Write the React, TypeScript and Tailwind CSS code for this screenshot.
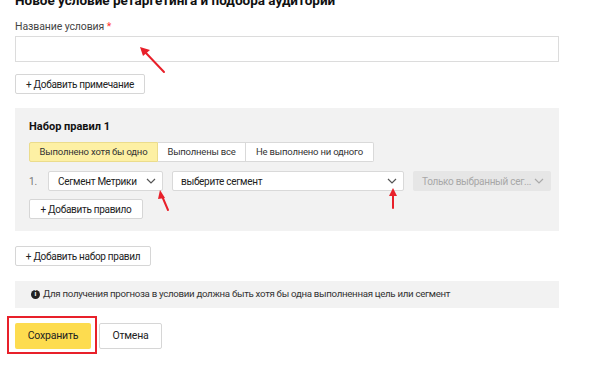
import React from "react";

const Chevron = ({ className = "" }: { className?: string }) => (
  <svg width="10" height="6" viewBox="0 0 10 6" className={className} fill="none">
    <path d="M1 1l4 4 4-4" stroke="currentColor" strokeWidth="1.2" />
  </svg>
);

export default function App() {
  return (
    <div
      className="relative w-[600px] h-[365px] overflow-hidden bg-white text-[#222] whitespace-nowrap"
      style={{ fontFamily: 'Roboto, "Liberation Sans", Arial, sans-serif' }}
    >
      <div className="pl-[15px] w-[559px]">
        <div className="-mt-[8px] h-[16px] text-[13.5px] leading-[16px] font-bold text-[#111]">
          Новое условие ретаргетинга и подбора аудитории
        </div>
        <div className="mt-[13px] h-[12px] text-[10.5px] tracking-[-0.1px] leading-[12px] text-[#444]">
          Название условия <span className="text-[#f33]">*</span>
        </div>
        <div className="mt-[3px] h-[26px] border border-[#dcdcdc] bg-white" />
        <div className="mt-[12px] flex">
          <div className="h-[20px] w-[130px] flex items-center justify-center border border-[#d6d6d6] rounded-[2px] text-[10px] tracking-[-0.3px] text-[#222] bg-white">
            + Добавить примечание
          </div>
        </div>

        <div className="mt-[14px] bg-[#f2f2f2] pl-[14px] pt-[12px] pb-[12px]">
          <div className="h-[14px] text-[11px] leading-[14px] font-bold text-[#111]">Набор правил 1</div>
          <div className="mt-[8px] flex h-[20px] text-[9.5px] tracking-[-0.2px]">
            <div className="w-[129px] flex items-center justify-center bg-[#fdf0a4] border border-[#ebdc8c] rounded-l-[2px] text-[#333]">
              Выполнено хотя бы одно
            </div>
            <div className="w-[88px] flex items-center justify-center bg-white border-y border-r border-[#d9d9d9] text-[#333]">
              Выполнены все
            </div>
            <div className="w-[128px] flex items-center justify-center bg-white border-y border-r border-[#d9d9d9] rounded-r-[2px] text-[#333]">
              Не выполнено ни одного
            </div>
          </div>
          <div className="mt-[9px] flex items-center h-[20px]">
            <div className="w-[19px] text-[10px] text-[#777]">1.</div>
            <div className="w-[115px] h-[20px] flex items-center justify-between pl-[9px] pr-[6px] bg-white border border-[#d9d9d9] rounded-[2px] text-[10px] tracking-[-0.3px] text-[#222]">
              <span>Сегмент Метрики</span>
              <Chevron className="text-[#555]" />
            </div>
            <div className="ml-[9px] w-[232px] h-[20px] flex items-center justify-between pl-[8px] pr-[6px] bg-white border border-[#d9d9d9] rounded-[2px] text-[10px] tracking-[-0.3px] text-[#222]">
              <span>выберите сегмент</span>
              <Chevron className="text-[#555]" />
            </div>
            <div className="ml-[9px] w-[138px] h-[20px] flex items-center justify-between pl-[9px] pr-[7px] bg-[#e6e6e6] rounded-[2px] text-[10px] tracking-[-0.3px] text-[#a8a8a8]">
              <span>Только выбранный сег...</span>
              <Chevron className="text-[#aaa]" />
            </div>
          </div>
          <div className="mt-[8px] flex">
            <div className="h-[20px] w-[114px] flex items-center justify-center border border-[#d6d6d6] rounded-[2px] text-[10px] tracking-[-0.3px] text-[#222] bg-white">
              + Добавить правило
            </div>
          </div>
        </div>

        <div className="mt-[15px] flex">
          <div className="h-[20px] w-[136px] flex items-center justify-center border border-[#d6d6d6] rounded-[2px] text-[10px] tracking-[-0.3px] text-[#222] bg-white">
            + Добавить набор правил
          </div>
        </div>

        <div className="mt-[15px] h-[27px] bg-[#f2f2f2] flex items-center pl-[16px] text-[9.7px] tracking-[-0.3px] text-[#333]">
          <span className="w-[9px] h-[9px] rounded-full bg-[#222] text-white text-[7px] font-bold leading-[9px] flex items-center justify-center mr-[3px] tracking-normal">
            i
          </span>
          Для получения прогноза в условии должна быть хотя бы одна выполненная цель или сегмент
        </div>

        <div className="mt-[15px] flex gap-[8px]">
          <div className="w-[76px] h-[26px] flex items-center justify-center bg-[#fddc4f] rounded-[2px] text-[10.5px] tracking-[-0.2px] text-[#222]">
            Сохранить
          </div>
          <div className="w-[63px] h-[26px] flex items-center justify-center bg-white border border-[#d6d6d6] rounded-[2px] text-[10.5px] tracking-[-0.2px] text-[#222]">
            Отмена
          </div>
        </div>
      </div>

      <div className="absolute left-[7px] top-[316px] w-[90px] h-[38px] border-2 border-[#e8202a]" />

      <svg className="absolute left-0 top-0" width="600" height="365" viewBox="0 0 600 365">
        <g stroke="#e8202a" strokeWidth="2" fill="#e8202a" strokeLinecap="round">
          <line x1="164" y1="72" x2="145" y2="52" />
          <polygon points="140,47 150,50 143,56" stroke="none" />
          <line x1="168" y1="210" x2="162" y2="196" />
          <polygon points="160,190 165,198 158,199" stroke="none" />
          <line x1="393" y1="208" x2="393" y2="195" />
          <polygon points="393,188 397,196 389,196" stroke="none" />
        </g>
      </svg>
    </div>
  );
}
